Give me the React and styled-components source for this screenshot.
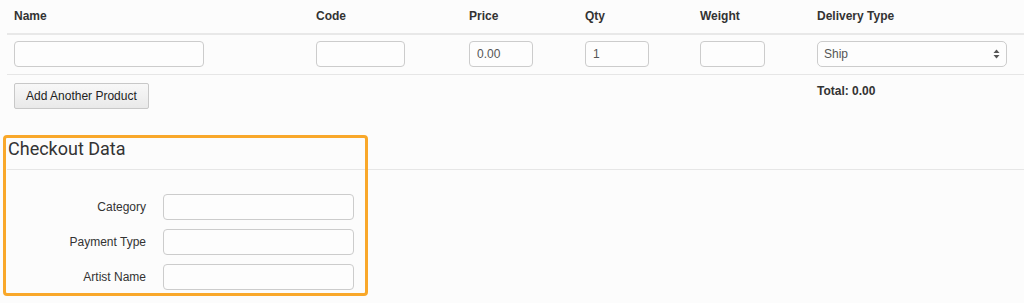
import React from "react";
import styled, { createGlobalStyle } from "styled-components";

const GlobalStyle = createGlobalStyle`
  body {
    margin: 0;
    background: #fcfcfc;
    color: #333;
    font-family: "Liberation Sans", Arial, sans-serif;
    font-size: 12px;
  }
`;

const Page = styled.div`
  padding-left: 7px;
  padding-bottom: 6px;
`;

const Row = styled.div`
  display: grid;
  grid-template-columns: 302px 153px 116px 115px 117px 1fr;
  border-bottom: ${(props) => props.line || "none"};
`;

const Cell = styled.div`
  padding: ${(props) => props.pad || "0 18px 0 7px"};
  font-weight: ${(props) => (props.bold ? "bold" : "normal")};
  line-height: 17px;
`;

const HeadCell = styled(Cell)`
  padding: 8px 7px;
  font-weight: bold;
`;

const TextInput = styled.input`
  display: block;
  box-sizing: border-box;
  width: ${(props) => props.w}px;
  height: 26px;
  border: 1px solid #ccc;
  border-radius: 4px;
  background: #fdfdfd;
  padding: 0 7px;
  font-family: "Liberation Sans", Arial, sans-serif;
  font-size: 12px;
  color: #555;
  outline: none;
`;

const SelectWrap = styled.div`
  position: relative;
  width: 190px;
`;

const Select = styled.select`
  display: block;
  appearance: none;
  box-sizing: border-box;
  width: 100%;
  height: 26px;
  border: 1px solid #ccc;
  border-radius: 5px;
  background: #fdfdfd;
  padding: 0 6px;
  font-family: "Liberation Sans", Arial, sans-serif;
  font-size: 12px;
  color: #555;
  outline: none;
`;

const Arrows = styled.svg`
  position: absolute;
  right: 7px;
  top: 8px;
  pointer-events: none;
`;

const Button = styled.button`
  display: block;
  height: 26px;
  padding: 0 11px;
  border: 1px solid #c8c8c8;
  border-radius: 2px;
  background: linear-gradient(#f8f8f8, #e9e9e9);
  font-family: "Liberation Sans", Arial, sans-serif;
  font-size: 12px;
  color: #222;
`;

const Section = styled.section`
  position: relative;
  margin-top: 27px;
  padding-top: 2px;
`;

const Highlight = styled.div`
  position: absolute;
  top: -1px;
  left: -4px;
  width: 365px;
  height: 161px;
  box-sizing: border-box;
  border: 3px solid #f9a82a;
  border-radius: 4px;
  pointer-events: none;
`;

const Heading = styled.h2`
  margin: 0;
  padding: 0 0 9px 1px;
  font-family: Roboto, "Liberation Sans", sans-serif;
  font-weight: normal;
  font-size: 18px;
  line-height: 22px;
  color: #333;
  border-bottom: 1px solid #e6e6e6;
`;

const Form = styled.div`
  display: grid;
  grid-template-columns: 139px 191px;
  column-gap: 17px;
  row-gap: 9px;
  padding-top: 24px;
  align-items: center;
`;

const Label = styled.label`
  text-align: right;
  color: #333;
`;

const columns = [
  { title: "Name", w: 190 },
  { title: "Code", w: 89 },
  { title: "Price", w: 64, value: "0.00" },
  { title: "Qty", w: 64, value: "1" },
  { title: "Weight", w: 65 },
];

const fields = ["Category", "Payment Type", "Artist Name"];

export default function App() {
  return (
    <Page>
      <GlobalStyle />
      <Row line="2px solid #e8e8e8">
        {columns.map((c) => (
          <HeadCell key={c.title}>{c.title}</HeadCell>
        ))}
        <HeadCell>Delivery Type</HeadCell>
      </Row>
      <Row line="1px solid #e6e6e6">
        {columns.map((c) => (
          <Cell key={c.title} pad="6px 7px 7px">
            <TextInput w={c.w} defaultValue={c.value || ""} />
          </Cell>
        ))}
        <Cell pad="6px 18px 7px 7px">
          <SelectWrap>
            <Select defaultValue="Ship">
              <option>Ship</option>
              <option>Pickup</option>
            </Select>
            <Arrows width="7" height="10" viewBox="0 0 7 10">
              <path d="M3.5 0.5 L6.5 4 L0.5 4 Z" fill="#555" />
              <path d="M3.5 9.5 L6.5 6 L0.5 6 Z" fill="#555" />
            </Arrows>
          </SelectWrap>
        </Cell>
      </Row>
      <Row>
        <Cell pad="8px 7px 0">
          <Button>Add Another Product</Button>
        </Cell>
        <Cell />
        <Cell />
        <Cell />
        <Cell />
        <Cell pad="8px 7px 0" bold>
          Total: 0.00
        </Cell>
      </Row>
      <Section>
        <Highlight />
        <Heading>Checkout Data</Heading>
        <Form>
          {fields.map((f) => (
            <React.Fragment key={f}>
              <Label>{f}</Label>
              <TextInput w={191} />
            </React.Fragment>
          ))}
        </Form>
      </Section>
    </Page>
  );
}
